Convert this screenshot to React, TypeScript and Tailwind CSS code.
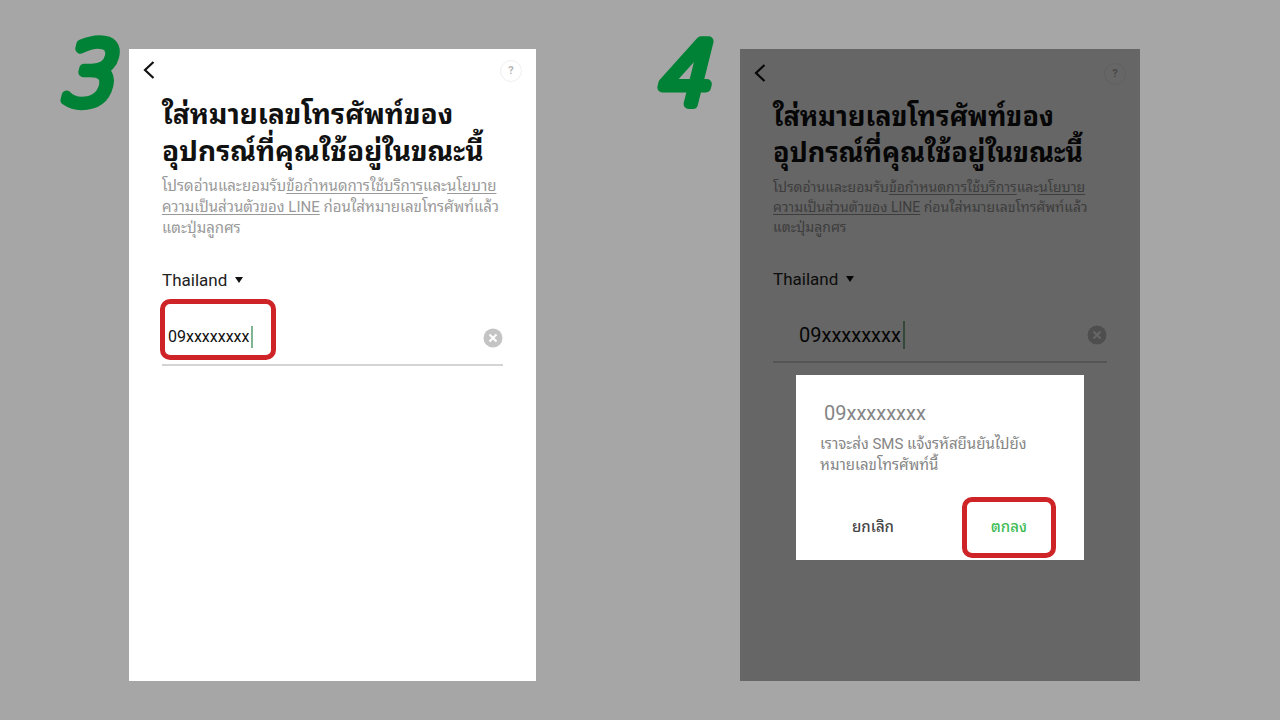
import { useState } from "react";
import clsx from "clsx";

const PHONE = "09xxxxxxxx";

const StepNumber = ({ value, className }: { value: number; className: string }) => (
  <svg
    role="img"
    aria-label={`${value}`}
    className={clsx("-mt-5 h-[84px] shrink-0 overflow-visible", className)}
    fill="#008236"
    stroke="#008236"
    strokeWidth="10"
    strokeLinejoin="round"
  >
    <text x="-2" y="75" className="font-['DejaVu_Sans_Light','DejaVu_Sans',sans-serif] text-[86px] font-extralight italic">
      {value}
    </text>
  </svg>
);

const BackButton = () => (
  <button type="button" aria-label="ย้อนกลับ" className="flex h-5 w-4 items-center justify-center">
    <svg viewBox="0 0 12 18" className="h-[18px] w-3" fill="none" stroke="#111" strokeWidth="2.2">
      <path d="M10.5 1 L2 9 L10.5 17" />
    </svg>
  </button>
);

const HelpButton = () => (
  <button
    type="button"
    aria-label="ช่วยเหลือ"
    className="flex size-[22px] items-center justify-center rounded-full border border-[#f0f0f0] text-[11px] font-bold text-[#b5b5b5]"
  >
    ?
  </button>
);

const ClearButton = ({ onClick, className }: { onClick: () => void; className: string }) => (
  <button type="button" aria-label="ล้าง" onClick={onClick} className={clsx("shrink-0 self-center", className)}>
    <svg viewBox="0 0 20 20" className="size-5">
      <circle cx="10" cy="10" r="9.5" fill="#c4c4c4" />
      <path d="M6.5 6.5 L13.5 13.5 M13.5 6.5 L6.5 13.5" stroke="#fff" strokeWidth="2" />
    </svg>
  </button>
);

type PhoneFormProps = {
  id: string;
  compact?: boolean;
};

const PhoneForm = ({ id, compact = false }: PhoneFormProps) => {
  const [phone, setPhone] = useState(PHONE);

  return (
    <div className="whitespace-nowrap">
      <header className={clsx("flex justify-between pl-3 pr-[14px]", compact ? "pt-[14px]" : "pt-[11px]")}>
        <BackButton />
        <HelpButton />
      </header>

      <div className="px-[33px]">
        <h2
          className={clsx(
            "mt-[14px] font-bold text-[#111]",
            compact ? "text-[27px] leading-9" : "text-[28px] leading-[37px]"
          )}
        >
          ใส่หมายเลขโทรศัพท์ของ
          <br />
          อุปกรณ์ที่คุณใช้อยู่ในขณะนี้
        </h2>

        <p className={clsx("mt-[6px] text-[#999]", compact ? "text-sm leading-5" : "text-[15px] leading-[21px]")}>
          โปรดอ่านและยอมรับ
          <a href="#terms" className="underline underline-offset-2">ข้อกำหนดการใช้บริการ</a>
          และ
          <a href="#privacy" className="underline underline-offset-2">
            นโยบาย
            <br />
            ความเป็นส่วนตัวของ LINE
          </a>{" "}
          ก่อนใส่หมายเลขโทรศัพท์แล้ว
          <br />
          แตะปุ่มลูกศร
        </p>

        <div className={clsx("flex items-center gap-2", compact ? "mt-[30px]" : "mt-[29px]")}>
          <select
            aria-label="ประเทศ"
            className="field-sizing-content appearance-none bg-transparent text-[17px] leading-6 text-[#222]"
          >
            <option>Thailand</option>
          </select>
          <svg viewBox="0 0 8 6" className="h-[6px] w-2" fill="#111">
            <path d="M0 0 H8 L4 6 Z" />
          </svg>
        </div>

        <div
          className={clsx(
            "flex items-start justify-between border-b-2 border-[#d4d4d4]",
            compact ? "mt-[14px] h-[58px]" : "mt-[7px] h-[67px]"
          )}
        >
          <label
            htmlFor={id}
            className={clsx(
              "flex items-center",
              compact
                ? "h-full pl-[26px] pt-1"
                : "-ml-[2px] h-[61px] w-[116px] rounded-[10px] border-5 border-[#cf2427] pl-[3px] pt-[14px]"
            )}
          >
            <input
              id={id}
              type="tel"
              aria-label="หมายเลขโทรศัพท์"
              value={phone}
              onChange={(e) => setPhone(e.target.value)}
              className={clsx(
                "field-sizing-content bg-transparent pr-[2px] text-[#111] outline-none",
                compact ? "text-[20px]" : "text-[16px]"
              )}
            />
            <span className={clsx("w-[2px] bg-[#7fb592]", compact ? "h-7" : "h-[22px]")} />
          </label>
          <ClearButton onClick={() => setPhone("")} className={compact ? "pt-1" : "pt-3"} />
        </div>
      </div>
    </div>
  );
};

const ConfirmDialog = () => (
  <div className="absolute inset-0 flex items-start justify-center bg-black/60 px-14 pt-[326px]">
    <div role="dialog" aria-labelledby="confirm-title" className="w-full bg-white whitespace-nowrap">
      <h3 id="confirm-title" className="pl-7 pt-6 text-[20px] leading-7 text-[#858585]">
        {PHONE}
      </h3>
      <p className="mt-[7px] pl-6 text-[15px] leading-[21px] text-[#858585]">
        เราจะส่ง SMS แจ้งรหัสยืนยันไปยัง
        <br />
        หมายเลขโทรศัพท์นี้
      </p>
      <div className="mt-[21px] flex justify-between pb-[2px] pl-[30px] pr-7 text-[15px]">
        <button type="button" className="h-[61px] w-[94px] font-medium text-[#444]">
          ยกเลิก
        </button>
        <button
          type="button"
          className="h-[61px] w-[94px] rounded-[10px] border-5 border-[#cf2427] font-medium text-[#3dbb55]"
        >
          ตกลง
        </button>
      </div>
    </div>
  </div>
);

const App = () => {
  return (
    <main className="grid min-h-screen grid-cols-2 bg-[#a6a6a6] pt-[49px] pb-[39px] font-[Roboto,'Noto_Sans_Thai_Looped','Noto_Looped_Thai',Loma,sans-serif]">
      <section className="flex pl-15 pr-26">
        <StepNumber value={3} className="w-[69px]" />
        <div className="min-w-0 flex-1 bg-white">
          <PhoneForm id="phone-step-3" />
        </div>
      </section>

      <section className="flex pl-4 pr-35">
        <StepNumber value={4} className="w-[84px]" />
        <div className="relative min-w-0 flex-1 bg-white">
          <PhoneForm id="phone-step-4" compact />
          <ConfirmDialog />
        </div>
      </section>
    </main>
  );
};

export default App;
